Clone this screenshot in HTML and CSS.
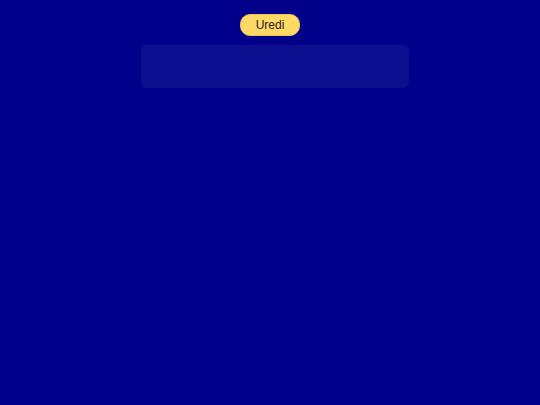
FILE: index.html
```html
<!DOCTYPE html>
<html>
<head>
<meta charset="utf-8">
<link rel="stylesheet" href="styles.css">
</head>
<body>
<div class="page">
  <button class="edit-btn">Uredi</button>
  <div class="panel"></div>
</div>
</body>
</html>
```
FILE: styles.css
```css
html, body {
  margin: 0;
  padding: 0;
  background: #00008b;
  height: 100%;
}
.page {
  display: flex;
  flex-direction: column;
  align-items: center;
  padding-top: 14px;
  gap: 9px;
  font-family: "Liberation Sans", Arial, sans-serif;
}
.edit-btn {
  width: 60px;
  height: 22px;
  border: 1px solid #e8c25a;
  border-radius: 10px;
  background: #ffd966;
  color: #222;
  font-family: "Liberation Sans", Arial, sans-serif;
  font-size: 12px;
  padding: 0;
  margin-left: 0;
}
.panel {
  width: 268px;
  height: 43px;
  border-radius: 5px;
  background: rgba(255, 255, 255, 0.05);
  margin-left: 10px;
}
```
